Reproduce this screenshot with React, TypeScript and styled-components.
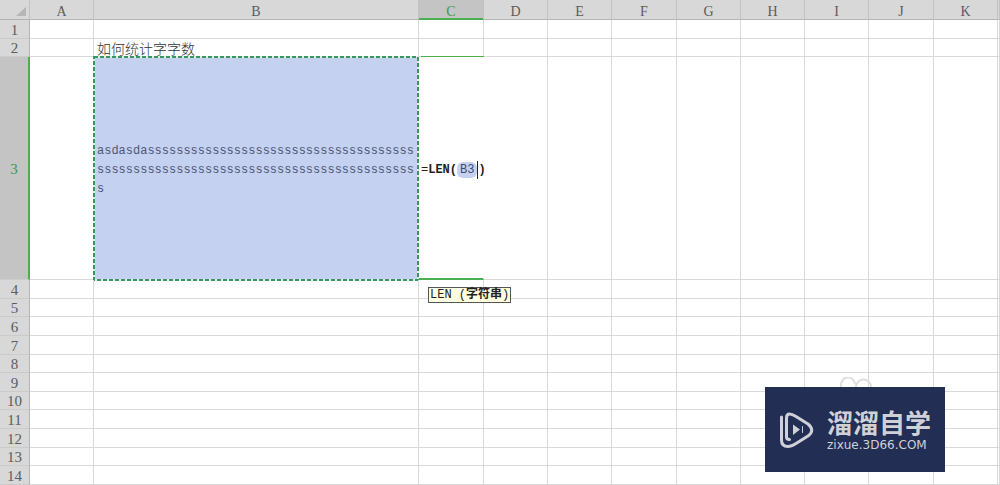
import React from "react";
import styled, { createGlobalStyle, css } from "styled-components";

const GlobalStyle = createGlobalStyle`
  * { box-sizing: border-box; }
  body { margin: 0; background: #fff; }
`;

const GRID = "#d9d9d9";
const GREEN = "#4caf50";

const Page = styled.main`
  position: relative;
  min-height: 100vh;
  max-height: 100vh;
  overflow: hidden;
`;

const Sheet = styled.table`
  width: 100%;
  table-layout: fixed;
  border-collapse: separate;
  border-spacing: 0;
  font-family: "Liberation Mono", "Noto Sans CJK SC", monospace;
  font-size: 12px;
`;

const Col = styled.col<{ $w?: number }>`
  ${(p) => p.$w && css`width: ${p.$w}px;`}
`;

const Row = styled.tr<{ $h: number }>`
  height: ${(p) => p.$h}px;
`;

const headText = css`
  padding: 0;
  font-family: "Liberation Serif", serif;
  font-weight: 400;
  text-align: center;
  overflow: hidden;
`;

const ColHead = styled.th<{ $active?: boolean }>`
  ${headText}
  padding-top: 5px;
  font-size: 14px;
  line-height: 14px;
  color: ${(p) => (p.$active ? "#3f9a45" : "#5c5c5c")};
  background: ${(p) => (p.$active ? "#c4c4c4" : "#d8d8d8")};
  border-right: 1px solid #c2c2c2;
  border-bottom: 1px solid #b4b4b4;
  ${(p) => p.$active && css`box-shadow: inset 0 -1px ${GREEN}; border-bottom-color: ${GREEN};`}
`;

const RowHead = styled.th<{ $active?: boolean }>`
  ${headText}
  padding-top: 1px;
  font-size: 15px;
  line-height: 14px;
  color: ${(p) => (p.$active ? "#3f9a45" : "#5c5c5c")};
  background: ${(p) => (p.$active ? "#c4c4c4" : "#d8d8d8")};
  border-bottom: 1px solid #cbcbcb;
  border-right: ${(p) => (p.$active ? `2px solid ${GREEN}` : "1px solid #b4b4b4")};
`;

const Corner = styled.td`
  padding: 0 3px 3px 0;
  background: #d8d8d8;
  border-bottom: 1px solid #b4b4b4;
  border-right: 1px solid #c2c2c2;
  vertical-align: bottom;
`;

const CornerMark = styled.svg`
  display: block;
  margin-left: auto;
`;

const Cell = styled.td`
  position: relative;
  padding: 0;
  border-right: 1px solid ${GRID};
  border-bottom: 1px solid ${GRID};
`;

const Title = styled.div`
  padding: 2px 0 0 3px;
  font-family: "Noto Sans CJK SC", sans-serif;
  font-size: 14px;
  font-weight: 300;
  line-height: 15px;
  color: #333;
  white-space: nowrap;
`;

const PickedCell = styled(Cell)`
  padding: 5px 3px 0;
  background: #c5d1f0;
  color: #4d5876;
  line-height: 19px;
  word-break: break-all;
`;

const Ants = styled.svg`
  position: absolute;
  top: -1px;
  left: -1px;
  width: calc(100% + 2px);
  height: calc(100% + 3px);
  overflow: visible;
`;

const Edge = styled.rect`
  x: 1px;
  y: 1px;
  width: calc(100% - 2px);
  height: calc(100% - 2px);
  fill: none;
  stroke-width: 2px;
`;

const EditCell = styled(Cell)`
  padding-top: 4px;
  border-right-color: #fff;
  border-bottom: 2px solid ${GREEN};
`;

const TopLine = styled.div`
  position: absolute;
  top: -1px;
  left: 2px;
  right: -1px;
  height: 1px;
  background: ${GREEN};
`;

const Formula = styled.div`
  display: flex;
  align-items: center;
  padding-left: 2px;
  line-height: 18px;
  font-weight: 700;
  color: #222;
  white-space: nowrap;
`;

const Plain = styled.span`
  font-weight: 400;
`;

const Reference = styled.span`
  padding: 0 3px;
  border-radius: 6px;
  background: #c5d1f0;
  color: #3c4a70;
  font-weight: 400;
  line-height: 16px;
`;

const Caret = styled.span`
  flex: none;
  width: 1px;
  height: 18px;
  background: #222;
`;

const Hint = styled.div`
  position: absolute;
  z-index: 2;
  top: calc(100% + 9px);
  left: 9px;
  padding: 1px 1px 0;
  border: 1px solid #555;
  background: #ffffe1;
  color: #222;
  font-size: 12px;
  line-height: 13px;
  white-space: pre;
`;

const Brand = styled.aside`
  position: absolute;
  right: 55px;
  top: 387px;
  display: flex;
  align-items: center;
  gap: 12px;
  width: 180px;
  height: 85px;
  padding-left: 14px;
  background: #222e54;
  color: #d0d1d8;
`;

const Ears = styled.svg`
  position: absolute;
  left: 75px;
  bottom: 100%;
`;

const BrandText = styled.div`
  display: grid;
  gap: 5px;
`;

const BrandName = styled.div`
  font-family: "Noto Sans CJK SC", sans-serif;
  font-size: 26px;
  font-weight: 700;
  line-height: 26px;
  white-space: nowrap;
`;

const BrandUrl = styled.div`
  font-family: "DejaVu Sans", sans-serif;
  font-size: 12px;
  line-height: 10px;
  white-space: nowrap;
`;

const columns = [
  { name: "A", w: 64 },
  { name: "B", w: 325 },
  { name: "C", w: 65 },
  { name: "D", w: 64 },
  { name: "E", w: 64 },
  { name: "F", w: 65 },
  { name: "G", w: 64 },
  { name: "H", w: 64 },
  { name: "I", w: 64 },
  { name: "J", w: 65 },
  { name: "K", w: 64 },
  { name: "", w: undefined },
];

const rowHeights = [19, 18, 223, 19, 18, 19, 19, 18, 19, 18, 19, 19, 18, 19];

const sample = "asdasda" + "s".repeat(82);

function Picked() {
  return (
    <PickedCell>
      {sample}
      <Ants aria-hidden="true">
        <Edge stroke="#dfeee6" />
        <Edge stroke="#3a9660" strokeDasharray="4 2" />
      </Ants>
    </PickedCell>
  );
}

function Editing() {
  return (
    <EditCell>
      <TopLine />
      <Formula role="textbox" aria-label="C3">
        <Plain>=</Plain>LEN(<Reference>B3</Reference>
        <Caret />)
      </Formula>
      <Hint role="tooltip">
        LEN (<b>字符串</b>)
      </Hint>
    </EditCell>
  );
}

export default function App() {
  return (
    <>
      <GlobalStyle />
      <Page>
        <Sheet>
          <colgroup>
            <Col $w={30} />
            {columns.map((c) => (
              <Col key={c.name} $w={c.w} />
            ))}
          </colgroup>
          <thead>
            <Row $h={20}>
              <Corner>
                <CornerMark width="10" height="9" viewBox="0 0 10 9" aria-hidden="true">
                  <path d="M10 0V9H0Z" fill="#b5b5b5" />
                </CornerMark>
              </Corner>
              {columns.map((c) => (
                <ColHead key={c.name} scope="col" $active={c.name === "C"}>
                  {c.name}
                </ColHead>
              ))}
            </Row>
          </thead>
          <tbody>
            {rowHeights.map((h, i) => (
              <Row key={i} $h={h}>
                <RowHead scope="row" $active={i === 2}>
                  {i + 1}
                </RowHead>
                {columns.map((c) => {
                  const id = `${c.name}${i + 1}`;
                  if (id === "B3") return <Picked key={id} />;
                  if (id === "C3") return <Editing key={id} />;
                  return <Cell key={id}>{id === "B2" && <Title>如何统计字字数</Title>}</Cell>;
                })}
              </Row>
            ))}
          </tbody>
        </Sheet>
        <Brand>
          <Ears width="32" height="10" viewBox="0 0 32 10" fill="none" stroke="#dedede" strokeWidth="2" aria-hidden="true">
            <path d="M1 10A7 8 0 0 1 15 7M16 10A7 7 0 0 1 31 10" />
          </Ears>
          <svg width="36" height="38" viewBox="0 0 36 38" fill="none" stroke="#d0d1d8" strokeLinecap="round" strokeLinejoin="round" aria-hidden="true">
            <path d="M2.500 6V29Q2.500 35.500 9 35.500Q12 35.500 17 32.500L29 25Q36.500 19.500 29 13L17 5.500Q13 3 10.500 3Q7.500 3 7.500 7V26Q7.500 28.500 10.500 28.500" strokeWidth="3" />
            <path d="M14 13.500L21 18.500L14 24Z" fill="#d0d1d8" stroke="none" />
            <path d="M23.500 15.500V21.500" strokeWidth="1" />
          </svg>
          <BrandText>
            <BrandName>溜溜自学</BrandName>
            <BrandUrl>zixue.3D66.COM</BrandUrl>
          </BrandText>
        </Brand>
      </Page>
    </>
  );
}
